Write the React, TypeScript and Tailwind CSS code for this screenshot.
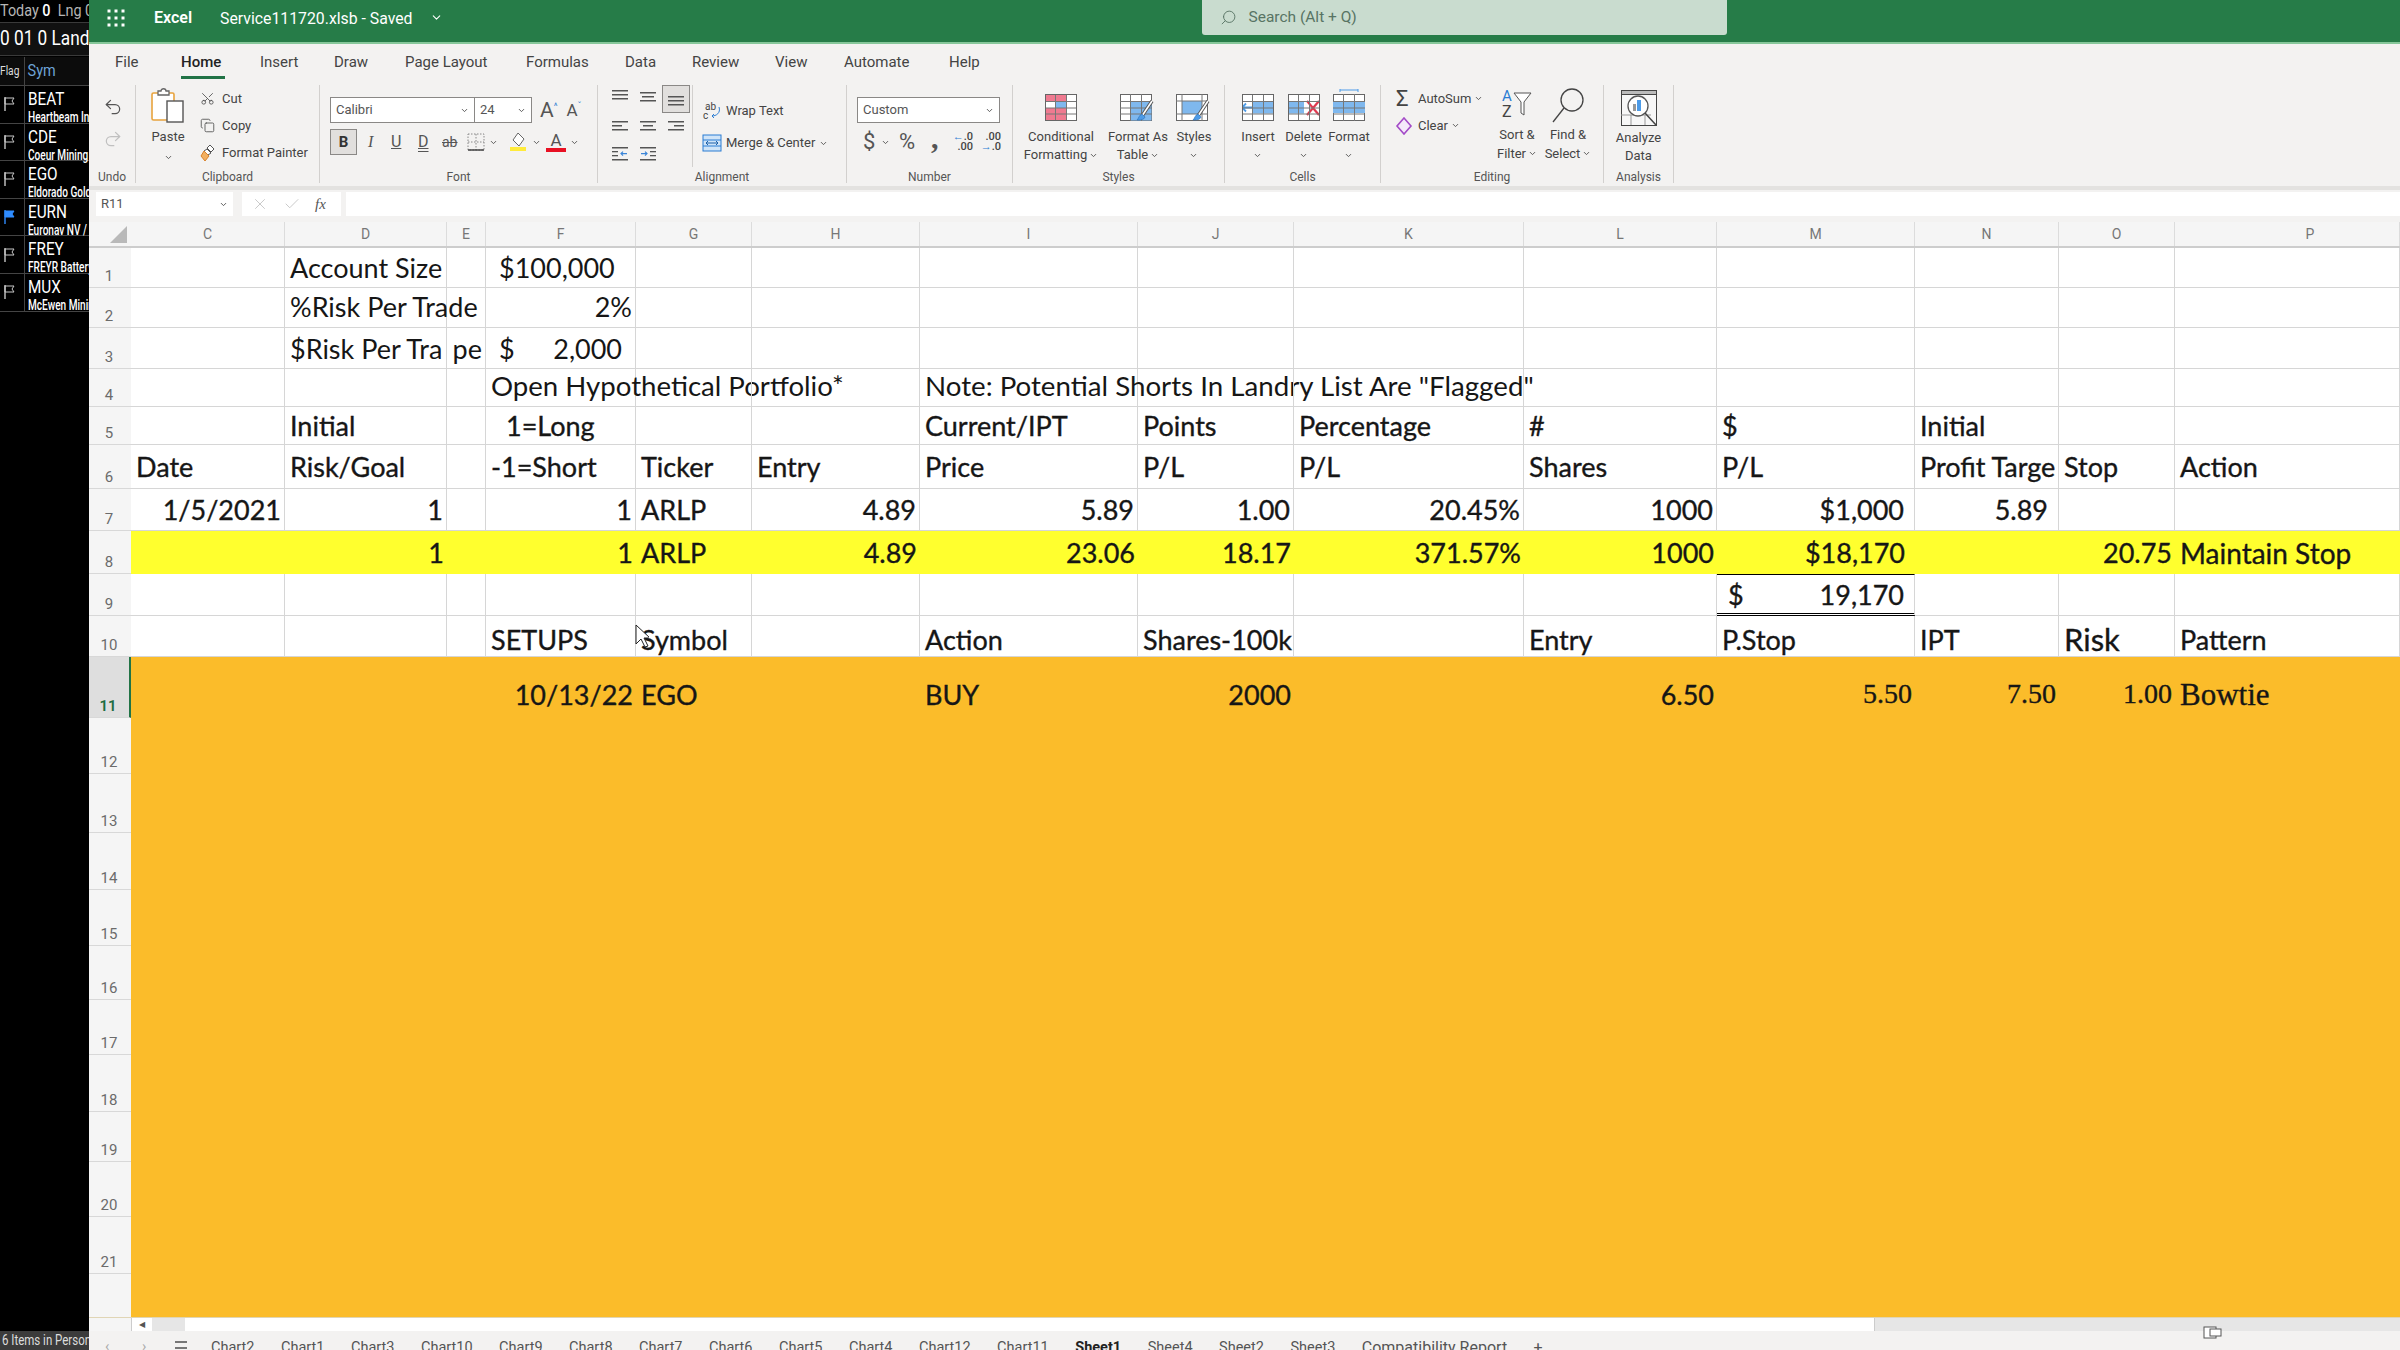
import React from "react";
import { ChevronDown, Search, Scissors, Copy, Undo2, Redo2, X, Check } from "lucide-react";

const COLS = "grid grid-cols-[42px_154px_162px_39px_150px_116px_168px_218px_156px_230px_193px_198px_144px_116px_225px]";
const LETTERS = ["C", "D", "E", "F", "G", "H", "I", "J", "K", "L", "M", "N", "O", "P"];
const SHEET_FONT = "font-['Lato',sans-serif]";
const SERIF = "font-['Liberation_Serif',serif] text-[28px]";
const HEAVY = "[-webkit-text-stroke:0.35px_#161616]";

type C = { t?: React.ReactNode; r?: boolean; cls?: string; clip?: boolean };
type Row = { n: number; h: string; bg?: string; sel?: boolean; txt?: string; cells: Record<string, C> };

const rows: Row[] = [
  { n: 1, h: "h-[40px]", cells: { D: { t: "Account Size" }, F: { t: "$100,000", cls: "pl-[13px]" } } },
  { n: 2, h: "h-[40px]", txt: "pb-[2px]", cells: { D: { t: "%Risk Per Trade" }, F: { t: "2%", r: true } } },
  {
    n: 3,
    h: "h-[41px]",
    cells: {
      D: { t: "$Risk Per Tra", clip: true },
      E: { t: "pe", r: true },
      F: { t: <span className="flex w-full justify-between pl-[8px] pr-[10px]"><span>$</span><span>2,000</span></span> },
    },
  },
  {
    n: 4,
    h: "h-[38px]",
    txt: "pb-[3px]",
    cells: {
      F: { t: "Open Hypothetical Portfolio*", cls: "!text-[27.6px]" },
      I: { t: 'Note: Potential Shorts In Landry List Are "Flagged"', cls: "!text-[27.7px]" },
    },
  },
  {
    n: 5,
    h: "h-[38px]",
    txt: HEAVY,
    cells: {
      D: { t: "Initial" },
      F: { t: "1=Long", cls: "pl-[20px]" },
      I: { t: "Current/IPT" },
      J: { t: "Points" },
      K: { t: "Percentage" },
      L: { t: "#" },
      M: { t: "$" },
      N: { t: "Initial" },
    },
  },
  {
    n: 6,
    h: "h-[44px]",
    txt: HEAVY,
    cells: {
      C: { t: "Date" },
      D: { t: "Risk/Goal" },
      F: { t: "-1=Short" },
      G: { t: "Ticker" },
      H: { t: "Entry" },
      I: { t: "Price" },
      J: { t: "P/L" },
      K: { t: "P/L" },
      L: { t: "Shares" },
      M: { t: "P/L" },
      N: { t: "Profit Targe", clip: true },
      O: { t: "Stop" },
      P: { t: "Action" },
    },
  },
  {
    n: 7,
    h: "h-[42px]",
    txt: HEAVY,
    cells: {
      C: { t: "1/5/2021", r: true },
      D: { t: "1", r: true },
      F: { t: "1", r: true },
      G: { t: "ARLP" },
      H: { t: "4.89", r: true },
      I: { t: "5.89", r: true },
      J: { t: "1.00", r: true },
      K: { t: "20.45%", r: true },
      L: { t: "1000", r: true },
      M: { t: "$1,000", r: true, cls: "pr-[10px]" },
      N: { t: "5.89", r: true, cls: "pr-[10px]" },
    },
  },
  {
    n: 8,
    h: "h-[43px]",
    bg: "bg-[#ffff2e]",
    txt: HEAVY,
    cells: {
      D: { t: "1", r: true },
      F: { t: "1", r: true },
      G: { t: "ARLP" },
      H: { t: "4.89", r: true },
      I: { t: "23.06", r: true },
      J: { t: "18.17", r: true },
      K: { t: "371.57%", r: true },
      L: { t: "1000", r: true },
      M: { t: "$18,170", r: true, cls: "pr-[10px]" },
      O: { t: "20.75", r: true },
      P: { t: "Maintain Stop", cls: "text-[28px]" },
    },
  },
  {
    n: 9,
    h: "h-[42px]",
    txt: HEAVY,
    cells: {
      M: {
        t: <span className="flex w-full justify-between pl-[6px] pr-[7px]"><span>$</span><span>19,170</span></span>,
        cls: "border-t border-t-black border-b-[3px] border-b-black border-double",
      },
    },
  },
  {
    n: 10,
    h: "h-[41px]",
    txt: `${HEAVY} pt-[6px]`,
    cells: {
      F: { t: "SETUPS" },
      G: { t: "Symbol" },
      I: { t: "Action" },
      J: { t: "Shares-100k" },
      L: { t: "Entry" },
      M: { t: "P.Stop" },
      N: { t: "IPT" },
      O: { t: "Risk", cls: "text-[31px]" },
      P: { t: "Pattern" },
    },
  },
  {
    n: 11,
    h: "h-[61px]",
    bg: "bg-[#fbbc2a]",
    sel: true,
    txt: `${HEAVY} pt-[13px]`,
    cells: {
      F: { t: "10/13/22", r: true },
      G: { t: "EGO" },
      I: { t: "BUY" },
      J: { t: "2000", r: true },
      L: { t: "6.50", r: true },
      M: { t: "5.50", r: true, cls: SERIF },
      N: { t: "7.50", r: true, cls: SERIF },
      O: { t: "1.00", r: true, cls: SERIF },
      P: { t: "Bowtie", cls: "font-['Liberation_Serif',serif] text-[31px]" },
    },
  },
];

const tail = [
  { n: 12, h: "h-[56px]" },
  { n: 13, h: "h-[59px]" },
  { n: 14, h: "h-[57px]" },
  { n: 15, h: "h-[56px]" },
  { n: 16, h: "h-[54px]" },
  { n: 17, h: "h-[55px]" },
  { n: 18, h: "h-[57px]" },
  { n: 19, h: "h-[50px]" },
  { n: 20, h: "h-[55px]" },
  { n: 21, h: "h-[57px]" },
  { n: 0, h: "h-[45px]" },
];

function RowHead({ n, sel }: { n?: number; sel?: boolean }) {
  return (
    <div
      className={`flex items-end justify-center pr-[2px] text-[15px] border-b border-[#d8d8d8] ${
        sel ? "bg-[#dedede] text-[#1e6c41] font-semibold border-r-2 border-r-[#217346]" : "bg-[#f5f5f5] text-[#6b6b6b]"
      } font-['Roboto',sans-serif]`}
    >
      {n || ""}
    </div>
  );
}

function SheetRow({ row }: { row: Row }) {
  return (
    <div className={`${COLS} ${row.h}`}>
      <RowHead n={row.n} sel={row.sel} />
      <div className={`col-span-14 grid grid-cols-subgrid ${row.bg ?? "bg-white"}`}>
        {LETTERS.map((l) => {
          const c = row.cells[l];
          return (
            <div
              key={l}
              className={`flex min-w-0 items-center whitespace-nowrap pl-[5px] pr-[3px] text-[27px] leading-none text-[#161616] ${SHEET_FONT} ${row.txt ?? ""} ${
                row.bg ? "" : "border-r border-b border-[#d6d6d6]"
              } ${c?.r ? "justify-end" : "justify-start"} ${c?.clip ? "overflow-hidden" : ""} ${c?.cls ?? ""}`}
            >
              {c?.t}
            </div>
          );
        })}
      </div>
    </div>
  );
}

function Flag({ on }: { on?: boolean }) {
  return (
    <svg width="14" height="16" viewBox="0 0 14 16" className="shrink-0">
      <path d="M2 1v14" stroke={on ? "#2f8cff" : "#c8c8c8"} strokeWidth="1.4" />
      <path d="M2 2h9l-2 3 2 3H2z" fill={on ? "#2f8cff" : "none"} stroke={on ? "#2f8cff" : "#c8c8c8"} />
    </svg>
  );
}

const symbols = [
  ["BEAT", "Heartbeam Inc"],
  ["CDE", "Coeur Mining"],
  ["EGO", "Eldorado Gold"],
  ["EURN", "Euronav NV /"],
  ["FREY", "FREYR Battery"],
  ["MUX", "McEwen Mining"],
];

function Sidebar() {
  return (
    <aside className="flex h-full w-[89px] shrink-0 flex-col overflow-hidden bg-black font-['Roboto',sans-serif]">
      <div className="flex h-[23px] items-center whitespace-nowrap border-b border-[#3a3a3a] text-[16px] text-[#b5b5b5]">
        <span className="origin-left scale-x-[.9]">Today <b className="text-white font-medium">0</b>&nbsp; Lng 0</span>
      </div>
      <div className="flex h-[33px] items-center whitespace-nowrap bg-[#111] text-[21px] text-white border-b border-[#3a3a3a]">
        <span className="origin-left scale-x-[.82]">0 01 0 Landry</span>
      </div>
      <div className="mt-[1px] flex h-[29px] items-center border-b border-[#444] bg-[#0c0c0c] text-[#6ea4d8]">
        <div className="flex h-full w-[25px] items-center overflow-hidden border-r border-[#444] text-[12px] text-[#ddd]">
          <span className="origin-left scale-x-[.85]">Flag</span>
        </div>
        <span className="origin-left scale-x-[.85] pl-[3px] text-[17px]">Sym</span>
      </div>
      {symbols.map(([s, n], i) => (
        <div key={s} className="flex h-[37.6px] border-b border-[#444]">
          <div className="flex h-full w-[25px] shrink-0 items-center justify-start pl-[3px] border-r border-[#444]">
            <Flag on={i === 3} />
          </div>
          <div className="flex min-w-0 flex-col whitespace-nowrap pl-[3px] leading-none text-white">
            <span className="origin-left scale-x-[.85] text-[18px] pt-[4px]">{s}</span>
            <span className="origin-left scale-x-[.72] text-[14px] pt-[2px] font-medium">{n}</span>
          </div>
        </div>
      ))}
      <div className="flex-1" />
      <div className="flex h-[19px] items-center whitespace-nowrap bg-[#3b3b3b] pl-[2px] text-[14px] text-[#ddd]">
        <span className="origin-left scale-x-[.82]">6 Items in Personal</span>
      </div>
    </aside>
  );
}

function Chev({ className = "" }: { className?: string }) {
  return <ChevronDown size={9} strokeWidth={2.5} className={`shrink-0 text-[#555] ${className}`} />;
}

function Group({ w, label, children, sep = true }: { w: string; label: string; children: React.ReactNode; sep?: boolean }) {
  return (
    <div className={`flex h-[98px] shrink-0 flex-col ${w} ${sep ? "border-r border-[#d2d0ce]" : ""}`}>
      <div className="flex min-h-0 flex-1">{children}</div>
      <div className="-mb-[3px] h-[17px] text-center text-[12px] leading-[17px] text-[#555]">{label}</div>
    </div>
  );
}

/* ---------- ribbon glyphs ---------- */
function PasteIcon() {
  return (
    <svg width="36" height="36" viewBox="0 0 36 36">
      <rect x="2" y="6" width="22" height="27" rx="1.5" fill="#fff" stroke="#e8a33d" strokeWidth="1.6" />
      <path d="M8 8V4h3c0-3 5-3 5 0h3v4z" fill="#fff" stroke="#666" strokeWidth="1.3" />
      <rect x="17" y="14" width="16" height="21" fill="#fff" stroke="#555" strokeWidth="1.4" />
    </svg>
  );
}
function PainterIcon() {
  return (
    <svg width="18" height="18" viewBox="0 0 18 18">
      <path d="M10 1l4 4-3 3-4-4z" fill="#fff" stroke="#555" />
      <path d="M7 5l4 4-3 2-4-4z" fill="#fff" stroke="#555" />
      <path d="M4 7l5 5-4 5-4-5z" fill="#f2b061" stroke="#d9822b" />
    </svg>
  );
}
function AlignIcon({ lines }: { lines: [number, number][] }) {
  return (
    <svg width="18" height="16" viewBox="0 0 18 16">
      {lines.map(([x, w], i) => (
        <rect key={i} x={x} y={2 + i * 4} width={w} height="1.5" fill="#555" />
      ))}
    </svg>
  );
}
function IndentIcon({ out }: { out?: boolean }) {
  return (
    <svg width="18" height="18" viewBox="0 0 18 18">
      <rect x="1" y="2" width="16" height="1.5" fill="#555" />
      <rect x="1" y="14" width="16" height="1.5" fill="#555" />
      <rect x={out ? 1 : 11} y="6" width="6" height="1.3" fill="#555" />
      <rect x={out ? 1 : 11} y="10" width="6" height="1.3" fill="#555" />
      <path d={out ? "M16 8.6H10m2-2-2 2 2 2" : "M2 8.6h6m-2-2 2 2-2 2"} stroke="#3c86d8" fill="none" strokeWidth="1.2" />
    </svg>
  );
}
function GridIcon({ children, w = 32, h = 27 }: { children?: React.ReactNode; w?: number; h?: number }) {
  return (
    <svg width={w} height={h} viewBox="0 0 32 27">
      <rect x="0.5" y="0.5" width="31" height="26" fill="#fff" stroke="#666" />
      {children}
      <path d="M10.5 0v27M21.5 0v27M0 7.5h32M0 14h32M0 20h32" stroke="#777" strokeWidth="1" fill="none" />
      <rect x="0.5" y="0.5" width="31" height="26" fill="none" stroke="#666" />
    </svg>
  );
}
function Brush() {
  return (
    <g>
      <path d="M32 7 22 22" stroke="#555" strokeWidth="3.5" />
      <path d="M32 7 22 22" stroke="#fff" strokeWidth="1.6" />
      <path d="M22 20c-3 1-3 4-5 6 3 0 7 0 8-3z" fill="#4c9be8" stroke="#2b6fb4" strokeWidth=".6" />
    </g>
  );
}
function StackLabel({ a, b, chev = true }: { a: string; b?: string; chev?: boolean }) {
  return (
    <div className="mt-[7px] flex flex-col items-center text-center text-[13px] leading-[18px] text-[#444] whitespace-nowrap">
      <span>{a}</span>
      <span className="flex h-[18px] items-center gap-[2px]">
        {b}
        {chev && <Chev />}
      </span>
    </div>
  );
}
function BigBtn({ w, icon, a, b }: { w: string; icon: React.ReactNode; a: string; b?: string }) {
  return (
    <div className={`flex shrink-0 flex-col items-center pt-[9px] ${w}`}>
      <div className="flex h-[27px] items-end">{icon}</div>
      <StackLabel a={a} b={b} />
    </div>
  );
}
function SelectBox({ w, label, b = true }: { w: string; label: string; b?: boolean }) {
  return (
    <div className={`flex h-[26px] items-center justify-between border border-[#8a8886] bg-white px-[5px] text-[13px] text-[#555] ${w} ${b ? "" : "border-l-0"}`}>
      <span>{label}</span>
      <Chev />
    </div>
  );
}

function Ribbon() {
  return (
    <div className="h-[142px] shrink-0 bg-[#f3f2f1] font-['Roboto',sans-serif] text-[13px] text-[#444]">
      <div className="flex h-[41px] items-start pt-[7px] text-[15px] text-[#444]">
        <span className="ml-[26px] w-[66px]">File</span>
        <span className="relative w-[79px] font-medium text-[#222]">
          Home
          <span className="absolute left-0 top-[25px] h-[3px] w-[44px] bg-[#217346]" />
        </span>
        <span className="w-[74px]">Insert</span>
        <span className="w-[71px]">Draw</span>
        <span className="w-[121px]">Page Layout</span>
        <span className="w-[99px]">Formulas</span>
        <span className="w-[67px]">Data</span>
        <span className="w-[83px]">Review</span>
        <span className="w-[69px]">View</span>
        <span className="w-[105px]">Automate</span>
        <span>Help</span>
      </div>

      <div className="flex">
        <Group w="w-[47px]" label="Undo">
          <div className="flex w-full flex-col items-center gap-[12px] pt-[12px] pl-[1px]">
            <Undo2 size={20} strokeWidth={1.5} className="text-[#555]" />
            <Redo2 size={20} strokeWidth={1.5} className="text-[#c0c0c0]" />
          </div>
        </Group>

        <Group w="w-[184px]" label="Clipboard">
          <div className="flex w-[64px] shrink-0 flex-col items-center pt-[2px]">
            <PasteIcon />
            <span className="mt-[4px]">Paste</span>
            <Chev className="mt-[6px]" />
          </div>
          <div className="flex flex-col">
            {[
              [<Scissors key="s" size={15} strokeWidth={1.4} className="rotate-[-90deg] text-[#555]" />, "Cut"],
              [<Copy key="c" size={15} strokeWidth={1.4} className="text-[#555]" />, "Copy"],
              [<PainterIcon key="p" />, "Format Painter"],
            ].map(([i, t], k) => (
              <div key={k} className="flex h-[27px] items-center">
                <span className="flex w-[22px] justify-start">{i}</span>
                <span className="whitespace-nowrap">{t}</span>
              </div>
            ))}
          </div>
        </Group>

        <Group w="w-[278px]" label="Font">
          <div className="flex flex-col pl-[10px] pt-[12px]">
            <div className="flex items-center">
              <SelectBox w="w-[145px]" label="Calibri" />
              <SelectBox w="w-[57px]" label="24" b={false} />
              <span className="ml-[8px] text-[21px] leading-none text-[#555]">A<span className="align-super text-[9px] text-[#2b7cd3]">^</span></span>
              <span className="ml-[9px] text-[17px] leading-none text-[#555]">A<span className="align-super text-[9px] text-[#2b7cd3]">ˇ</span></span>
            </div>
            <div className="mt-[6px] flex h-[26px] items-center text-[16px] text-[#555]">
              <span className="flex h-[26px] w-[27px] items-center justify-center border border-[#8a8886] bg-[#e1dfdd] text-[15px] font-bold text-[#333]">B</span>
              <span className="w-[28px] pl-[11px] font-['Liberation_Serif',serif] italic">I</span>
              <span className="w-[27px] pl-[6px] underline">U</span>
              <span className="w-[27px] pl-[6px] underline decoration-double">D</span>
              <span className="w-[27px] pl-[3px] text-[14px] line-through">ab</span>
              <svg width="18" height="18" viewBox="0 0 18 18" className="ml-[1px]">
                <rect x="1" y="1" width="16" height="16" fill="none" stroke="#888" strokeDasharray="1.5 1.5" />
                <path d="M9 1v16M1 9h16" stroke="#888" strokeDasharray="1.5 1.5" />
                <path d="M1 17h16" stroke="#444" strokeWidth="1.5" />
              </svg>
              <Chev className="ml-[4px]" />
              <span className="flex w-[32px] flex-col items-center pl-[7px]">
                <svg width="18" height="20" viewBox="0 0 18 20">
                  <path d="M9 1l6 6-5 7-6-6z" fill="#fff" stroke="#666" />
                  <rect x="1" y="15" width="16" height="4" fill="#ffeb3b" />
                </svg>
              </span>
              <Chev className="ml-[2px]" />
              <span className="ml-[5px] flex w-[20px] flex-col items-center text-[17px] leading-[16px]">
                A<span className="h-[4px] w-[20px] bg-[#e81123]" />
              </span>
              <Chev className="ml-[4px]" />
            </div>
          </div>
        </Group>

        <Group w="w-[249px]" label="Alignment">
          <div className="flex w-full">
            <div className="grid h-[82px] w-[95px] shrink-0 grid-cols-[28px_28px_28px] grid-rows-[28px_28px_26px] content-start border-r border-[#d2d0ce] pl-[8px]">
              <span className="flex items-center justify-center pb-[6px]"><AlignIcon lines={[[1, 16], [1, 16], [1, 16]]} /></span>
              <span className="flex items-center justify-center pb-[2px]"><AlignIcon lines={[[1, 16], [3, 12], [1, 16]]} /></span>
              <span className="flex items-center justify-center border border-[#8a8886] bg-[#e1dfdd] pt-[6px]"><AlignIcon lines={[[1, 16], [1, 16], [1, 16]]} /></span>
              <span className="flex items-center justify-center"><AlignIcon lines={[[1, 16], [1, 10], [1, 16]]} /></span>
              <span className="flex items-center justify-center"><AlignIcon lines={[[1, 16], [4, 10], [1, 16]]} /></span>
              <span className="flex items-center justify-center"><AlignIcon lines={[[1, 16], [7, 10], [1, 16]]} /></span>
              <span className="flex items-center justify-center"><IndentIcon out /></span>
              <span className="flex items-center justify-center"><IndentIcon /></span>
            </div>
            <div className="flex flex-col pl-[9px] pt-[14px]">
              <div className="flex h-[24px] items-center gap-[4px] whitespace-nowrap">
                <svg width="20" height="20" viewBox="0 0 20 20">
                  <text x="3" y="9" fontSize="10" fill="#444" fontFamily="Roboto">ab</text>
                  <text x="1" y="18" fontSize="10" fill="#444" fontFamily="Roboto">c</text>
                  <path d="M17 6c2 6-3 9-7 9m2-2-2 2 2 2" stroke="#2b7cd3" fill="none" />
                </svg>
                Wrap Text
              </div>
              <div className="mt-[8px] flex h-[24px] items-center gap-[4px] whitespace-nowrap">
                <svg width="20" height="20" viewBox="0 0 20 20">
                  <rect x="1" y="2" width="18" height="16" fill="#cfe4f8" stroke="#2b7cd3" />
                  <path d="M1 7h18M1 13h18" stroke="#2b7cd3" />
                  <path d="M4 10h12M6 8l-2 2 2 2M14 8l2 2-2 2" stroke="#1b5fa8" fill="none" />
                </svg>
                Merge &amp; Center
                <Chev />
              </div>
            </div>
          </div>
        </Group>

        <Group w="w-[166px]" label="Number">
          <div className="flex flex-col pl-[10px] pt-[12px]">
            <SelectBox w="w-[143px]" label="Custom" />
            <div className="mt-[6px] flex h-[26px] items-center text-[#555]">
              <span className="w-[20px] pl-[6px] text-[22px] leading-none">$</span>
              <Chev className="ml-[4px]" />
              <span className="ml-[9px] w-[27px] text-[22px] leading-none">%</span>
              <span className="w-[23px] pl-[5px] pb-[8px] text-[30px] font-bold leading-none font-['Liberation_Serif',serif]">,</span>
              <span className="flex w-[24px] flex-col items-end text-[11px] font-medium leading-[10px] text-[#444]">
                <span><b className="text-[#2b7cd3]">←</b>.0</span>
                <span>.00</span>
              </span>
              <span className="flex w-[28px] flex-col items-end text-[11px] font-medium leading-[10px] text-[#444]">
                <span>.00</span>
                <span><b className="text-[#2b7cd3]">→</b>.0</span>
              </span>
            </div>
          </div>
        </Group>

        <Group w="w-[212px]" label="Styles">
          <div className="flex pl-[3px]">
            <BigBtn
              w="w-[90px]"
              a="Conditional"
              b="Formatting"
              icon={
                <GridIcon>
                  <rect x="0.5" y="0.5" width="21" height="7" fill="#ef7a90" />
                  <rect x="10.5" y="7" width="11" height="7" fill="#7fb8ee" />
                  <rect x="0.5" y="14" width="21" height="12" fill="#ef7a90" />
                </GridIcon>
              }
            />
            <BigBtn
              w="w-[64px]"
              a="Format As"
              b="Table"
              icon={
                <svg width="36" height="27" viewBox="0 0 36 27">
                  <rect x="0.5" y="0.5" width="31" height="26" fill="#fff" stroke="#666" />
                  <rect x="11" y="7.5" width="20.5" height="19" fill="#7fb8ee" />
                  <path d="M10.5 0v27M21.5 0v27M0 7.5h32M0 14h32M0 20h32" stroke="#777" fill="none" />
                  <Brush />
                </svg>
              }
            />
            <BigBtn
              w="w-[48px]"
              a="Styles"
              icon={
                <svg width="36" height="27" viewBox="0 0 36 27">
                  <rect x="0.5" y="0.5" width="31" height="26" fill="#fff" stroke="#666" />
                  <rect x="6" y="7" width="20" height="13" fill="#7fb8ee" />
                  <path d="M0 7h32M0 20h32M6 0v27M26 0v27" stroke="#777" fill="none" />
                  <Brush />
                </svg>
              }
            />
          </div>
        </Group>

        <Group w="w-[156px]" label="Cells">
          <div className="flex pl-[10px]">
            <BigBtn
              w="w-[46px]"
              a="Insert"
              icon={
                <GridIcon>
                  <rect x="10" y="7.5" width="22" height="12" fill="#7fb8ee" />
                  <path d="M10 13.5H0m4-4-4 4 4 4" stroke="#4c9be8" strokeWidth="1.8" fill="none" />
                </GridIcon>
              }
            />
            <BigBtn
              w="w-[45px]"
              a="Delete"
              icon={
                <GridIcon>
                  <rect x="0" y="7.5" width="16" height="12" fill="#7fb8ee" />
                  <path d="M19 7l12 14M31 7 19 21" stroke="#e0394f" strokeWidth="2.2" />
                </GridIcon>
              }
            />
            <BigBtn
              w="w-[46px]"
              a="Format"
              icon={
                <svg width="32" height="32" viewBox="0 0 32 32">
                  <path d="M7 1h18M7 0v3M25 0v3" stroke="#4c9be8" fill="none" />
                  <rect x="0.5" y="5.5" width="31" height="26" fill="#fff" stroke="#666" />
                  <rect x="0" y="12" width="32" height="12" fill="#7fb8ee" />
                  <path d="M10.5 5v27M21.5 5v27M0 12.5h32M0 19h32M0 25h32" stroke="#777" fill="none" />
                </svg>
              }
            />
          </div>
        </Group>

        <Group w="w-[223px]" label="Editing">
          <div className="flex pl-[14px]">
            <div className="flex w-[102px] shrink-0 flex-col">
              <div className="flex h-[27px] items-center whitespace-nowrap">
                <span className="w-[23px] pl-[1px] text-[22px] leading-none text-[#444]">Σ</span>
                AutoSum
                <Chev className="ml-[3px]" />
              </div>
              <div className="flex h-[27px] items-center whitespace-nowrap">
                <span className="w-[23px]">
                  <svg width="18" height="18" viewBox="0 0 18 18">
                    <path d="M9 1l7 8-7 8-7-8z" fill="#f4e9fa" stroke="#a34bc7" strokeWidth="1.6" />
                  </svg>
                </span>
                Clear
                <Chev className="ml-[3px]" />
              </div>
            </div>
            <div className="flex w-[40px] shrink-0 flex-col items-center pt-[2px]">
              <svg width="32" height="32" viewBox="0 0 32 32">
                <text x="1" y="14" fontSize="15" fill="#2b7cd3" fontFamily="Roboto">A</text>
                <text x="1" y="30" fontSize="16" fill="#444" fontFamily="Roboto">Z</text>
                <path d="M13 6h17l-7 9v13l-3-2V15z" fill="#fff" stroke="#555" />
              </svg>
              <div className="mt-[6px] flex flex-col items-center leading-[19px] whitespace-nowrap">
                <span>Sort &amp;</span>
                <span className="flex items-center gap-[2px]">Filter<Chev /></span>
              </div>
            </div>
            <div className="flex w-[62px] shrink-0 flex-col items-center pt-[2px]">
              <svg width="36" height="36" viewBox="0 0 36 36" className="mb-[2px]">
                <circle cx="22" cy="13" r="11" fill="none" stroke="#444" strokeWidth="1.3" />
                <path d="M14 21 3 35" stroke="#444" strokeWidth="1.3" />
              </svg>
              <div className="flex flex-col items-center leading-[19px] whitespace-nowrap">
                <span>Find &amp;</span>
                <span className="flex items-center gap-[2px]">Select<Chev /></span>
              </div>
            </div>
          </div>
        </Group>

        <Group w="w-[70px]" label="Analysis">
          <div className="flex w-full flex-col items-center pt-[5px]">
            <svg width="36" height="36" viewBox="0 0 36 36">
              <rect x="0.5" y="0.5" width="35" height="35" fill="#f7f7f7" stroke="#444" />
              <rect x="0.5" y="0.5" width="35" height="4" fill="#bbb" stroke="#444" />
              <path d="M0 25h30M10 25v10M24 25v10" stroke="#999" fill="none" />
              <circle cx="17" cy="16" r="10" fill="#fff" stroke="#555" strokeWidth="1.3" />
              <rect x="12" y="14" width="3" height="7" fill="#999" />
              <rect x="16" y="10" width="4" height="11" fill="#4c9be8" />
              <path d="M24 23 35 35" stroke="#444" strokeWidth="1.5" />
            </svg>
            <div className="mt-[3px] flex flex-col items-center leading-[18px]">
              <span>Analyze</span>
              <span>Data</span>
            </div>
          </div>
        </Group>
      </div>
    </div>
  );
}

function FormulaBar() {
  return (
    <div className="flex h-[36px] shrink-0 flex-col bg-[#f3f2f1] font-['Roboto',sans-serif]">
      <div className="h-[4px] bg-[#e3e2e0]" />
      <div className="flex h-[26px] gap-[5px] pl-[7px] pt-[2px]">
        <div className="flex w-[137px] items-center justify-between bg-white px-[5px] text-[13px] text-[#555]">
          R11
          <Chev />
        </div>
        <div className="ml-[4px] flex w-[99px] items-center gap-[14px] bg-white pl-[9px] text-[#c4c4c4]">
          <X size={18} strokeWidth={1.2} />
          <Check size={18} strokeWidth={1.2} />
          <span className="font-['Liberation_Serif',serif] text-[15px] italic text-[#555]">fx</span>
        </div>
        <div className="flex-1 bg-white" />
      </div>
    </div>
  );
}

function HeaderRow() {
  return (
    <div className={`${COLS} h-[26px] shrink-0 border-b-2 border-[#cdcdcd] bg-[#f5f5f5] font-['Roboto',sans-serif]`}>
      <div className="flex items-center justify-end pr-[4px]">
        <svg width="17" height="17" viewBox="0 0 17 17">
          <path d="M17 0v17H0z" fill="#b9b9b9" />
        </svg>
      </div>
      {LETTERS.map((l) => (
        <div key={l} className={`flex items-center justify-center border-r border-[#dcdcdc] text-[14px] text-[#777] ${l === "P" ? "pl-[46px]" : ""}`}>
          {l}
        </div>
      ))}
    </div>
  );
}

const tabs = ["Chart2", "Chart1", "Chart3", "Chart10", "Chart9", "Chart8", "Chart7", "Chart6", "Chart5", "Chart4", "Chart12", "Chart11", "Sheet1", "Sheet4", "Sheet2", "Sheet3"];

function BottomBars() {
  return (
    <div className="flex flex-col font-['Roboto',sans-serif]">
      <div className="flex h-[14px] border-t border-[#e0d5b5]">
        <div className="h-full w-[42px] bg-[#f5f5f5]" />
        <div className="flex h-full w-[21px] items-center justify-center border-l border-[#ccc] bg-white text-[8px] text-[#555]">◀</div>
        <div className="h-full w-[33px] bg-[#e6e6e6]" />
        <div className="h-full w-[1690px] border-r border-[#ccc] bg-white" />
        <div className="h-full flex-1 bg-[#e6e6e6]" />
      </div>
      <div className="relative flex h-[19px] items-start gap-[26.5px] overflow-hidden bg-[#f3f2f1] pl-[122px] pt-[9px] text-[14.5px] leading-[16px] text-[#555]">
        <span className="absolute left-[16px] top-[8px] text-[#aaa]">‹</span>
        <span className="absolute left-[53px] top-[8px] text-[#aaa]">›</span>
        <span className="absolute left-[86px] top-[10px] h-[8px] w-[12px] border-y-2 border-[#777]" />
        {tabs.map((t) => (
          <span key={t} className={`whitespace-nowrap ${t === "Sheet1" ? "font-bold text-[#222]" : ""}`}>
            {t}
          </span>
        ))}
        <span className="whitespace-nowrap text-[16px]">Compatibility Report</span>
        <span className="text-[16px]">+</span>
      </div>
      <svg width="20" height="14" viewBox="0 0 20 14" className="absolute left-[2114px] top-[1326px]">
        <rect x="1" y="1" width="12" height="11" fill="#fff" stroke="#555" />
        <rect x="7" y="3" width="11" height="7" fill="#fff" stroke="#555" />
      </svg>
    </div>
  );
}

export default function App() {
  return (
    <div className="flex h-[1350px] w-[2400px] overflow-hidden bg-black">
      <Sidebar />
      <main className="relative flex min-w-0 flex-1 flex-col bg-white">
        <header className="flex h-[44px] shrink-0 items-start border-b-2 border-[#86c79a] bg-[#267c48] font-['Roboto',sans-serif] text-white">
          <svg width="18" height="18" viewBox="0 0 18 18" className="ml-[18px] mt-[9px]" fill="#fff">
            {[2, 9, 16].flatMap((x) => [2, 9, 16].map((y) => <rect key={`${x}${y}`} x={x - 1.5} y={y - 1.5} width="3" height="3" />))}
          </svg>
          <span className="ml-[29px] mt-[6px] text-[16px] font-semibold">Excel</span>
          <span className="ml-[28px] mt-[7px] whitespace-nowrap text-[15.8px]">Service111720.xlsb - Saved</span>
          <ChevronDown size={13} className="ml-[17px] mt-[11px]" />
          <div className="ml-[759px] flex h-[35px] w-[525px] self-start items-center gap-[12px] rounded-b-[3px] bg-[#c9dccf] pl-[18px] text-[15.5px] text-[#587464]">
            <Search size={17} strokeWidth={1.3} className="-scale-x-100" />
            Search (Alt + Q)
          </div>
        </header>
        <Ribbon />
        <FormulaBar />
        <HeaderRow />
        <div className="min-h-0 flex-1 overflow-hidden">
          {rows.map((r) => (
            <SheetRow key={r.n} row={r} />
          ))}
          {tail.map((r) => (
            <div key={r.n} className={`${COLS} ${r.h}`}>
              <RowHead n={r.n} />
              <div className="col-span-14 bg-[#fbbc2a]" />
            </div>
          ))}
        </div>
        <BottomBars />
        <svg width="14" height="24" viewBox="0 0 14 24" className="absolute left-[546px] top-[624px]">
          <path d="M1 1v19l5-5 4 8 3-1-4-8h6z" fill="#fff" stroke="#222" strokeWidth="1" />
        </svg>
      </main>
    </div>
  );
}
